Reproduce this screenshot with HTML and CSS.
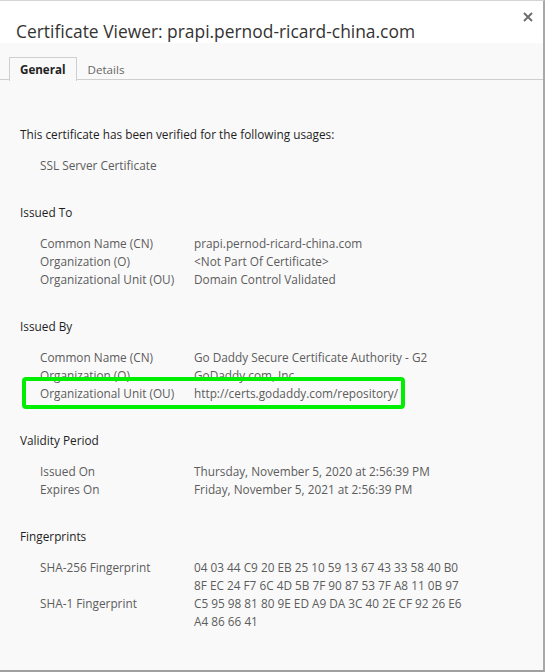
FILE: index.html
```html
<!DOCTYPE html>
<html>
<head>
<meta charset="utf-8">
<link rel="stylesheet" href="styles.css">
</head>
<body>
<div class="dialog">
  <header class="head">
    <h1 class="title">Certificate Viewer: prapi.pernod-ricard-china.com</h1>
    <svg class="close" width="10" height="10" viewBox="0 0 10 10"><path d="M1 1L9 9M9 1L1 9" stroke="#6a6a6a" stroke-width="1.8" fill="none"/></svg>
  </header>
  <div class="body">
    <nav class="tabs">
      <span class="tab active">General</span>
      <span class="tab">Details</span>
    </nav>
    <div class="content">
      <p class="intro">This certificate has been verified for the following usages:</p>
      <p class="usage">SSL Server Certificate</p>

      <section class="group">
        <h2 class="heading">Issued To</h2>
        <div class="rows">
          <div class="row"><span class="label">Common Name (CN)</span><span class="value">prapi.pernod-ricard-china.com</span></div>
          <div class="row"><span class="label">Organization (O)</span><span class="value">&lt;Not Part Of Certificate&gt;</span></div>
          <div class="row"><span class="label">Organizational Unit (OU)</span><span class="value">Domain Control Validated</span></div>
        </div>
      </section>

      <section class="group">
        <h2 class="heading">Issued By</h2>
        <div class="rows">
          <div class="row"><span class="label">Common Name (CN)</span><span class="value">Go Daddy Secure Certificate Authority - G2</span></div>
          <div class="row"><span class="label">Organization (O)</span><span class="value">GoDaddy.com, Inc.</span></div>
          <div class="row highlight"><span class="label">Organizational Unit (OU)</span><span class="value">http://certs.godaddy.com/repository/</span></div>
        </div>
      </section>

      <section class="group">
        <h2 class="heading">Validity Period</h2>
        <div class="rows">
          <div class="row"><span class="label">Issued On</span><span class="value">Thursday, November 5, 2020 at 2:56:39 PM</span></div>
          <div class="row"><span class="label">Expires On</span><span class="value">Friday, November 5, 2021 at 2:56:39 PM</span></div>
        </div>
      </section>

      <section class="group">
        <h2 class="heading">Fingerprints</h2>
        <div class="rows">
          <div class="row"><span class="label">SHA-256 Fingerprint</span><span class="value">04 03 44 C9 20 EB 25 10 59 13 67 43 33 58 40 B0<br>8F EC 24 F7 6C 4D 5B 7F 90 87 53 7F A8 11 0B 97</span></div>
          <div class="row"><span class="label">SHA-1 Fingerprint</span><span class="value">C5 95 98 81 80 9E ED A9 DA 3C 40 2E CF 92 26 E6<br>A4 86 66 41</span></div>
        </div>
      </section>
    </div>
  </div>
</div>
</body>
</html>
```
FILE: styles.css
```css
html, body {
  margin: 0;
  padding: 0;
  background: #ffffff;
}
body {
  font-family: "Open Sans", "DejaVu Sans", sans-serif;
}
.dialog {
  width: 543px;
  height: 669px;
  border-top: 1px solid #d4d4d4;
  border-right: 2px solid #a8a8a8;
  border-bottom: 2px solid #a0a0a0;
  display: flex;
  flex-direction: column;
  overflow: hidden;
}
.head {
  height: 42px;
  background: #ffffff;
  position: relative;
  flex: none;
}
.title {
  margin: 0;
  padding: 18px 0 0 16px;
  font-size: 17.4px;
  line-height: 24px;
  font-weight: normal;
  color: #333333;
}
.close {
  position: absolute;
  top: 11px;
  left: 523px;
}
.body {
  flex: 1;
  background: #f9f9f9;
}
.tabs {
  display: flex;
  padding: 14px 0 0 9px;
  border-bottom: 1px solid #cfcfcf;
  height: 22px;
}
.tab {
  display: block;
  padding: 0 10px;
  font-size: 11.6px;
  line-height: 23px;
  color: #666666;
  border: 1px solid transparent;
  border-bottom: none;
}
.tab.active {
  font-weight: bold;
  color: #222222;
  border-color: #cfcfcf;
  background: #f9f9f9;
  margin-bottom: -1px;
  height: 23px;
}
.content {
  padding: 45px 0 0 20px;
  font-size: 11.8px;
  line-height: 18px;
}
.intro {
  margin: 0;
  color: #1e1e1e;
}
.usage {
  margin: 13px 0 0 20px;
  color: #5c5c5c;
}
.group {
  margin-top: 29px;
}
.heading {
  margin: 0;
  font-size: 11.8px;
  line-height: 18px;
  font-weight: normal;
  color: #1e1e1e;
}
.rows {
  margin: 13px 0 0 20px;
}
.row {
  display: flex;
  color: #5c5c5c;
  position: relative;
}
.label {
  width: 154px;
  flex: none;
}
.value {
  flex: none;
}
.highlight::after {
  content: "";
  position: absolute;
  left: -18px;
  top: -7px;
  width: 375px;
  height: 24px;
  border: 4px solid #00ee00;
  border-radius: 4px;
}
```
